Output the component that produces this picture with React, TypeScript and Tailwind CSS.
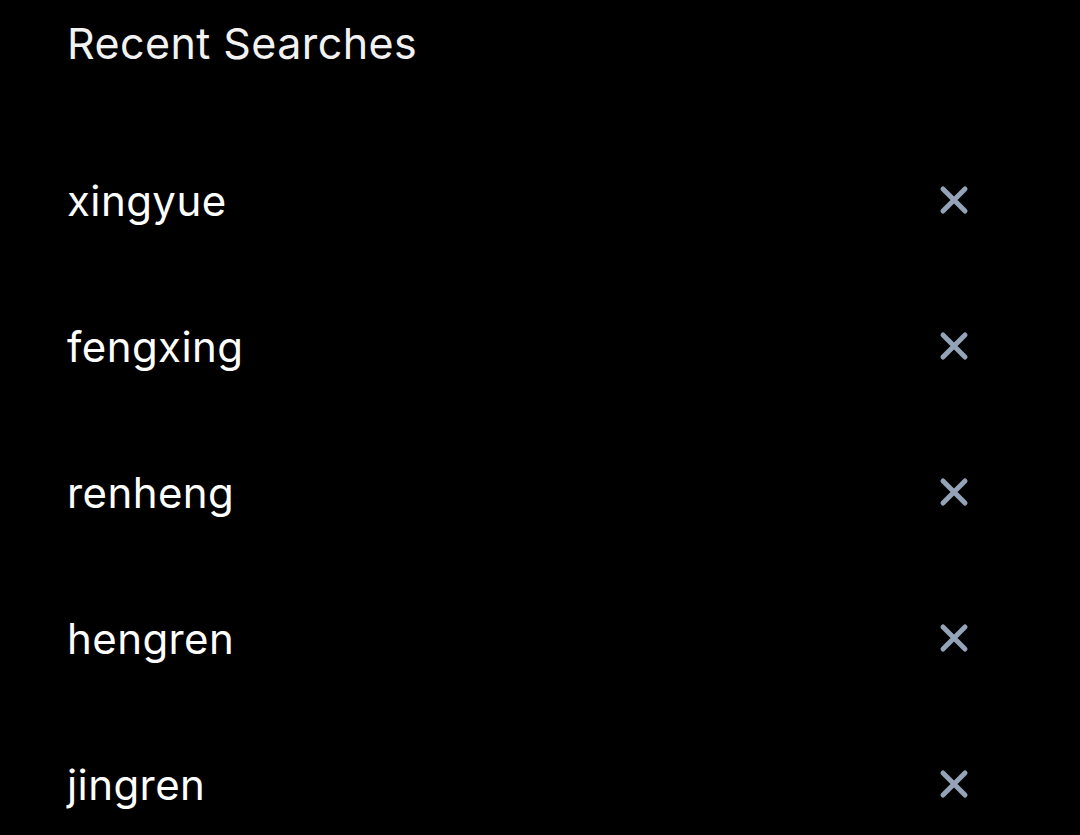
import React from 'react';

const searches = ['xingyue', 'fengxing', 'renheng', 'hengren', 'jingren'];

function CloseIcon() {
    return (
        <svg width="32" height="32" viewBox="0 0 32 32" fill="none">
            <path d="M5 5 27 27M27 5 5 27" stroke="#94a3b8" strokeWidth="5" strokeLinecap="round" />
        </svg>
    );
}

export default function App() {
    return (
        <div className="w-[1080px] h-[835px] bg-black overflow-hidden font-['Inter',sans-serif]">
            <div className="pl-[67px] pr-[110px]">
                {/* Header */}
                <h1 className="h-[86px] flex items-center text-[43px] tracking-[0.01em] text-[#f2f2f2] font-normal">
                    Recent Searches
                </h1>

                {/* List */}
                <ul className="mt-[41px]">
                    {searches.map((s) => (
                        <li key={s} className="h-[146px] flex items-center justify-between">
                            <span className="text-[42px] tracking-[0.01em] text-white">{s}</span>
                            <button className="w-[32px] h-[32px] flex items-center justify-center">
                                <CloseIcon />
                            </button>
                        </li>
                    ))}
                </ul>
            </div>
        </div>
    );
}
